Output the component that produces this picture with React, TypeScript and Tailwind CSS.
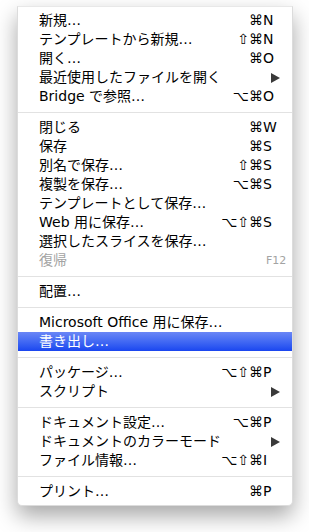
type Item = {
  label: string;
  mods?: string;
  keyChar?: string;
  sub?: boolean;
  disabled?: boolean;
  active?: boolean;
};

const groups: Item[][] = [
  [
    { label: "新規…", mods: "⌘", keyChar: "N" },
    { label: "テンプレートから新規…", mods: "⇧⌘", keyChar: "N" },
    { label: "開く…", mods: "⌘", keyChar: "O" },
    { label: "最近使用したファイルを開く", sub: true },
    { label: "Bridge で参照…", mods: "⌥⌘", keyChar: "O" },
  ],
  [
    { label: "閉じる", mods: "⌘", keyChar: "W" },
    { label: "保存", mods: "⌘", keyChar: "S" },
    { label: "別名で保存…", mods: "⇧⌘", keyChar: "S" },
    { label: "複製を保存…", mods: "⌥⌘", keyChar: "S" },
    { label: "テンプレートとして保存…" },
    { label: "Web 用に保存…", mods: "⌥⇧⌘", keyChar: "S" },
    { label: "選択したスライスを保存…" },
    { label: "復帰", keyChar: "F12", disabled: true },
  ],
  [{ label: "配置…" }],
  [
    { label: "Microsoft Office 用に保存…" },
    { label: "書き出し…", active: true },
  ],
  [
    { label: "パッケージ…", mods: "⌥⇧⌘", keyChar: "P" },
    { label: "スクリプト", sub: true },
  ],
  [
    { label: "ドキュメント設定…", mods: "⌥⌘", keyChar: "P" },
    { label: "ドキュメントのカラーモード", sub: true },
    { label: "ファイル情報…", mods: "⌥⇧⌘", keyChar: "I" },
  ],
  [{ label: "プリント…", mods: "⌘", keyChar: "P" }],
];

function Row({ item }: { item: Item }) {
  const color = item.active
    ? "text-white bg-gradient-to-b from-[#6a86f6] to-[#1a45ef]"
    : item.disabled
      ? "text-[#a3a3a3]"
      : "text-black";
  return (
    <li className={`flex items-center h-[19px] leading-[19px] pl-[21px] pr-[5px] ${color}`}>
      <span className="flex-1 whitespace-nowrap">{item.label}</span>
      <span className="whitespace-nowrap text-right">{item.mods}</span>
      <span className="w-[24px] flex items-center">
        {item.sub ? (
          <svg width="9" height="10" viewBox="0 0 9 10" className="ml-[8px]">
            <polygon points="0,0 9,5 0,10" fill="#3a3a3a" />
          </svg>
        ) : (
          <span className={item.keyChar === "F12" ? "text-[11px] ml-[3px]" : ""}>
            {item.keyChar}
          </span>
        )}
      </span>
    </li>
  );
}

export default function App() {
  return (
    <div className="w-[309px] h-[532px] bg-white pt-[6px] pl-[17px]">
      <div
        className="w-[276px] bg-white rounded-b-[5px] border border-[#dcdcdc] border-t-[#e8e8e8] shadow-[0_10px_22px_rgba(0,0,0,0.35)] py-[4px] text-[14px]"
        style={{ fontFamily: '"DejaVu Sans", "Noto Sans CJK JP", sans-serif' }}
      >
        {groups.map((group, gi) => (
          <div key={gi}>
            {gi > 0 && (
              <div className="h-[12px] pt-[6px]">
                <div className="h-px bg-[#e2e2e2]" />
              </div>
            )}
            <ul>
              {group.map((item) => (
                <Row key={item.label} item={item} />
              ))}
            </ul>
          </div>
        ))}
      </div>
    </div>
  );
}
